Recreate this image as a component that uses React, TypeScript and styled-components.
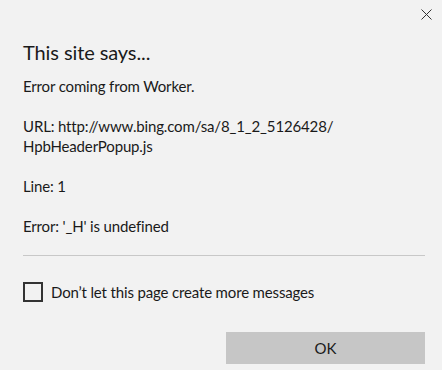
import React from 'react';
import styled, { createGlobalStyle } from 'styled-components';

const GlobalStyle = createGlobalStyle`
  html, body {
    margin: 0;
    padding: 0;
    background: #f2f2f2;
  }
  * {
    box-sizing: border-box;
  }
`;

const Dialog = styled.div`
  display: flex;
  flex-direction: column;
  width: 442px;
  height: 370px;
  padding: 0 17px 6px 23px;
  background: #f2f2f2;
  color: #1a1a1a;
  font-family: Lato, 'Noto Sans', sans-serif;
`;

const TopBar = styled.div`
  display: flex;
  justify-content: flex-end;
  height: 28px;
  margin-right: -17px;
`;

const CloseButton = styled.button`
  display: flex;
  align-items: center;
  justify-content: center;
  width: 32px;
  height: 28px;
  padding: 0;
  border: none;
  background: transparent;
  color: #333;
`;

const Title = styled.h1`
  margin: 10px 0 0;
  font-size: 20px;
  font-weight: 400;
  line-height: 28px;
  letter-spacing: -0.1px;
`;

const Message = styled.div`
  margin-top: 10px;
  font-size: 15px;
  line-height: 20px;
  letter-spacing: -0.15px;
`;

const Paragraph = styled.p`
  margin: 0 0 20px;
`;

const Divider = styled.hr`
  margin: -1px 0 0;
  border: none;
  border-top: 1px solid #c8c8c8;
`;

const CheckRow = styled.label`
  display: flex;
  align-items: center;
  gap: 8px;
  margin-top: 26px;
  font-size: 15px;
  line-height: 20px;
  letter-spacing: -0.15px;
`;

const Box = styled.span`
  width: 20px;
  height: 20px;
  border: 2px solid #333;
`;

const Footer = styled.div`
  display: flex;
  justify-content: flex-end;
  margin-top: auto;
`;

const OkButton = styled.button`
  width: 199px;
  height: 32px;
  border: none;
  background: #c6c6c6;
  color: #1a1a1a;
  font-family: inherit;
  font-size: 15px;
`;

const App: React.FC = () => (
  <React.Fragment>
    <GlobalStyle />
    <Dialog>
      <TopBar>
        <CloseButton aria-label="Close">
          <svg width="11" height="11" viewBox="0 0 11 11">
            <path d="M0.5 0.5 L10.5 10.5 M10.5 0.5 L0.5 10.5" stroke="#333" strokeWidth="1" />
          </svg>
        </CloseButton>
      </TopBar>
      <Title>This site says...</Title>
      <Message>
        <Paragraph>Error coming from Worker.</Paragraph>
        <Paragraph>
          URL: http://www.bing.com/sa/8_1_2_5126428/
          <br />
          HpbHeaderPopup.js
        </Paragraph>
        <Paragraph>Line: 1</Paragraph>
        <Paragraph>Error: '_H' is undefined</Paragraph>
      </Message>
      <Divider />
      <CheckRow>
        <Box />
        Don’t let this page create more messages
      </CheckRow>
      <Footer>
        <OkButton>OK</OkButton>
      </Footer>
    </Dialog>
  </React.Fragment>
);

export default App;
